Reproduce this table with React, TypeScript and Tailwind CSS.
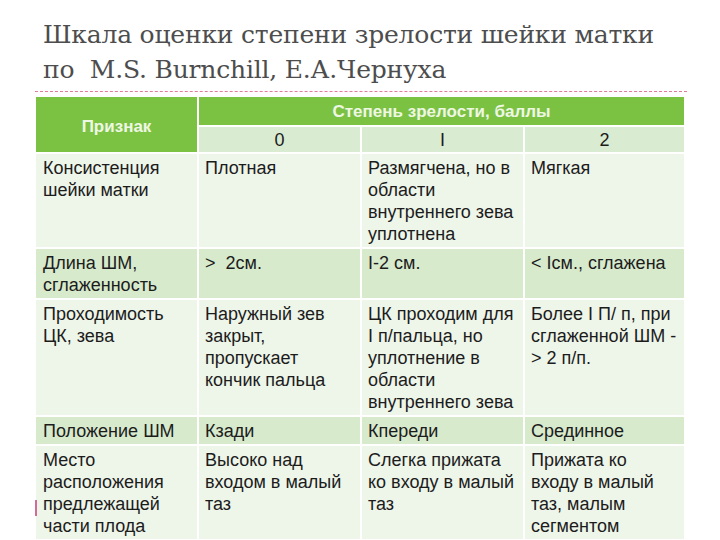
import React from 'react';

type Row = { cells: string[]; dark?: boolean };

// line breaks follow the reference slide
const rows: Row[] = [
  {
    cells: [
      'Консистенция\nшейки матки',
      'Плотная',
      'Размягчена, но в\nобласти\nвнутреннего зева\nуплотнена',
      'Мягкая',
    ],
  },
  {
    cells: ['Длина ШМ,\nсглаженность', '>  2см.', 'I-2 см.', '< Iсм., сглажена'],
    dark: true,
  },
  {
    cells: [
      'Проходимость\nЦК, зева',
      'Наружный зев\nзакрыт,\nпропускает\nкончик пальца',
      'ЦК проходим для\nI п/пальца, но\nуплотнение в\nобласти\nвнутреннего зева',
      'Более I П/ п, при\nсглаженной ШМ -\n> 2 п/п.',
    ],
  },
  {
    cells: ['Положение ШМ', 'Кзади', 'Кпереди', 'Срединное'],
    dark: true,
  },
  {
    cells: [
      'Место\nрасположения\nпредлежащей\nчасти плода',
      'Высоко над\nвходом в малый\nтаз',
      'Слегка прижата\nко входу в малый\nтаз',
      'Прижата ко\nвходу в малый\nтаз, малым\nсегментом',
    ],
  },
];

const App: React.FC = () => {
  return (
    <div className="relative h-[540px] w-[720px] overflow-hidden bg-white">
      {/* title */}
      <div
        className="pl-[43px] pt-[17px] text-[25px] leading-[35px] tracking-[-0.2px] text-[#4d4d4d]"
        style={{ fontFamily: '"DejaVu Serif", "Liberation Serif", serif' }}
      >
        <div>Шкала оценки степени зрелости шейки матки</div>
        <div>по&nbsp; M.S. Burnchill, Е.А.Чернуха</div>
      </div>
      <div className="ml-[35px] mt-[4px] w-[652px] border-t border-dashed border-[#e27a98]" />

      {/* table */}
      <div
        className="ml-[36px] mt-[5px] grid w-[648px] grid-cols-[161px_161px_161px_159px] gap-[2px] text-[18px] leading-[22px] text-[#1c1c1c]"
        style={{ fontFamily: '"Liberation Sans", Arial, sans-serif' }}
      >
        <div className="row-span-2 flex items-center justify-center bg-[#7cc242] pt-[4px] font-bold text-[17px] text-[#eef7e4]">
          Признак
        </div>
        <div className="col-span-3 flex h-[28px] items-center justify-center bg-[#7cc242] pt-[2px] font-bold text-[17px] text-[#eef7e4]">
          Степень зрелости, баллы
        </div>
        {['0', 'I', '2'].map((n) => (
          <div key={n} className="flex h-[25px] items-center justify-center bg-[#d9ebd0]">
            {n}
          </div>
        ))}

        {rows.map((row, i) =>
          row.cells.map((c, j) => (
            <div
              key={`${i}-${j}`}
              className={`whitespace-pre-wrap pb-[2px] pt-[3px] ${j === 0 ? 'pl-[7px]' : 'pl-[6px]'} ${
                row.dark ? 'bg-[#d7eacc]' : 'bg-[#eef5e9]'
              }`}
            >
              {c}
            </div>
          ))
        )}
      </div>

      <div className="absolute left-[35px] top-[500px] h-[16px] w-[2px] bg-[#d46a98]" />
    </div>
  );
};

export default App;
